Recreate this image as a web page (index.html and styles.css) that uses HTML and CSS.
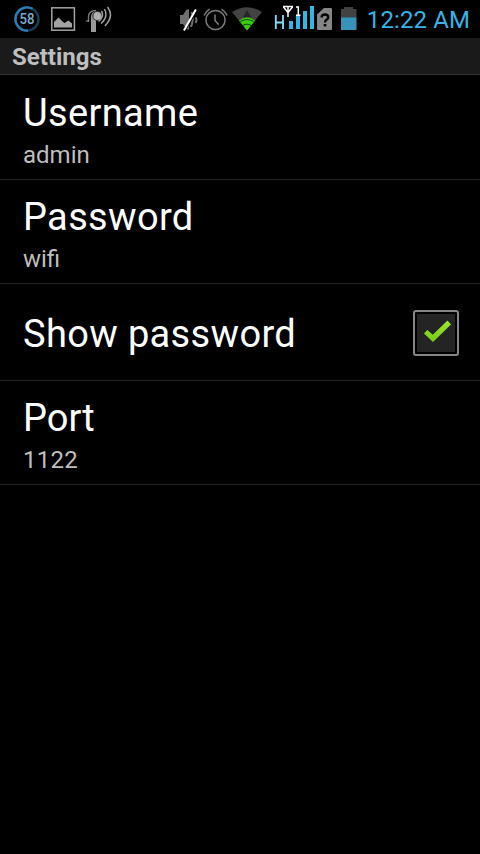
FILE: index.html
```html
<!DOCTYPE html>
<html lang="en">
<head>
<meta charset="utf-8">
<title>Settings</title>
<link rel="stylesheet" href="styles.css">
</head>
<body>
<header class="status">
  <div class="group notices">
    <svg width="28" height="38" viewBox="13 0 28 38">
      <circle cx="27" cy="19" r="11.6" fill="none" stroke="#173c57" stroke-width="2.4"/>
      <path d="M28 30.6A11.6 11.6 0 1 1 32.5 8.8" fill="none" stroke="#2b7db9" stroke-width="2.4"/>
      <text class="percent" x="27" y="24" text-anchor="middle" textLength="15" lengthAdjust="spacingAndGlyphs">58</text>
    </svg>
    <svg width="25" height="38" viewBox="51 0 25 38">
      <rect x="51.8" y="7.8" width="22.6" height="22.4" fill="none" stroke="#a3a3a3" stroke-width="1.5"/>
      <path d="M54 27.5V22l4.5-4.5 4 4 2 1.500 4-2.500 3.500 3v4z" fill="#a3a3a3"/>
    </svg>
    <svg width="27" height="38" viewBox="86 0 27 38">
      <path d="M91 32V17Q91 11 98 11L96 20V32z" fill="#999"/>
      <path d="M88.500 22V17Q88.500 10.500 96 10.500" fill="none" stroke="#777" stroke-width="1.400"/>
      <path d="M86 21h3" stroke="#999"/>
      <circle cx="97.300" cy="16" r="5" fill="#333"/>
      <circle cx="97.300" cy="16" r="3.900" fill="#b0b0b0"/>
      <path d="M101.500 11Q104.500 16 98.500 21.500M104.500 9Q108.500 17 101 23.500M107.500 7Q114.500 16 105 26" fill="none" stroke="#a0a0a0" stroke-width="1.500"/>
    </svg>
  </div>
  <div class="group system">
    <svg width="20" height="38" viewBox="179 0 20 38">
      <path d="M180 15h3l3.500-5.500h2.500v20h-2.500L183 24h-3z" fill="#707070"/>
      <path d="M191.500 12q2.500 7.500-.5 15M195.500 17.500q2 2 0 5.500" fill="none" stroke="#707070" stroke-width="2"/>
      <path d="M184.700 30.500L197 10" stroke="#000" stroke-width="2"/>
      <path d="M183.900 30.500L195.900 9.500" stroke="#fff" stroke-width="2"/>
    </svg>
    <svg width="26" height="38" viewBox="203 0 26 38">
      <g fill="none" stroke="#7b7b7b" stroke-width="1.500">
        <circle cx="215.500" cy="20" r="9.600"/>
        <path d="M215 14.500v6l3.700 4.300M204 15.500q1.800-4 5.600-6.300M221.500 9.200q4 2.300 5.600 6.300"/>
      </g>
    </svg>
    <svg class="wifi" width="30" height="38" viewBox="232 0 30 38">
      <path d="M232 12Q247 2.500 262 12L247 30.500z" fill="#424242"/>
      <path d="M247 10l4 7h-8z" fill="#252525"/>
      <path d="M239 20.500Q247 14.500 255 20.500L247 30.500z" fill="#36d006"/>
      <path d="M240.500 21.500Q247 17.500 253.500 21.500M243 25.500q4-2.500 8 0" fill="none" stroke="#174d0c" stroke-width="1.200"/>
    </svg>
    <svg width="42" height="38" viewBox="274 0 42 38">
      <path d="M275.800 15v14M283 15v14M275.800 22.500h7" fill="none" stroke="#8bdcf8" stroke-width="1.800"/>
      <path d="M289 21h4v8h-4zM296 16h4v13h-4zM303 11h4v18h-4zM310 6h4v23h-4z" fill="#33b5e5"/>
      <path d="M283 6.500h10M283.500 7L288 12.500L292.500 7M288 6v11" fill="none" stroke="#fff" stroke-width="1.500"/>
      <path d="M296 7h2.300V15M296 15.300h4.500" fill="none" stroke="#fff" stroke-width="1.500"/>
    </svg>
    <svg width="16" height="38" viewBox="317 0 16 38">
      <path d="M317 14.500L324 8h7q1 0 1 1V29q0 1-1 1H318q-1 0-1-1z" fill="#858585"/>
      <path d="M321.500 17.500q.2-3 3.500-3 3.300 0 3.300 2.700 0 1.500-1.800 2.600-1.500 1-1.500 2.700" fill="none" stroke="#050505" stroke-width="2.300"/>
      <path d="M323.700 24h2.600v2.500h-2.600z" fill="#050505"/>
    </svg>
    <svg width="16" height="38" viewBox="341 0 16 38">
      <path d="M341 9h3V7h9v2h3.500v8.500H341z" fill="#424242"/>
      <path d="M341 17.300h15.500V30H341z" fill="#3993b8"/>
    </svg>
  </div>
  <time class="clock">12:22 AM</time>
</header>
<h1 class="title"><span>Settings</span></h1>
<main class="list">
  <section class="row first">
    <h2 class="name">Username</h2>
    <p class="value">admin</p>
  </section>
  <section class="row">
    <h2 class="name">Password</h2>
    <p class="value">wifi</p>
  </section>
  <section class="row toggle">
    <h2 class="name">Show password</h2>
    <svg class="check" width="46" height="46" viewBox="413 310 46 46">
      <defs><linearGradient id="tick" x2="0" y2="1"><stop stop-color="#9dea32"/><stop offset="1" stop-color="#76ca10"/></linearGradient></defs>
      <rect x="414" y="311" width="44" height="44" rx="2" fill="#000" stroke="#858585" stroke-width="2"/>
      <path d="M417 314h38v38h-38z" fill="#242424"/>
      <path d="M424 333.500l3.300-3.500 5.500 4.700L447.500 320.500l3.500 4-18 17.500z" fill="url(#tick)"/>
    </svg>
  </section>
  <section class="row">
    <h2 class="name port">Port</h2>
    <p class="value number">1122</p>
  </section>
</main>
</body>
</html>
```
FILE: styles.css
```css
* { box-sizing: border-box; }
body { margin: 0; min-height: 854px; background: #000; color: #fff; font-family: Roboto, sans-serif; }
h1, h2, p { margin: 0; font-weight: 400; }
svg { display: block; flex: none; }
.status { display: flex; height: 38px; padding: 0 10px 0 13px; }
.group { display: flex; }
.notices { gap: 10px; }
.system { margin-left: 66px; gap: 4px; }
.system .wifi { margin-left: -1px; }
.system svg:nth-child(4) { margin-left: 8px; }
.system svg:nth-child(5) { margin-left: -3px; }
.system svg:nth-child(6) { margin-left: 4px; }
.percent { font-size: 15px; font-weight: 500; fill: #78add0; }
.clock { margin-left: auto; font-size: 24px; line-height: 40px; letter-spacing: 0.1px; color: #33b5e5; white-space: nowrap; }
.title { display: flex; align-items: center; height: 37px; padding: 2px 0 0 12px; border-bottom: 1px solid #333; background: #1a1a1a; color: #bebebe; font-size: 24px; line-height: 34px; font-weight: 700; }
.row { display: flex; flex-direction: column; height: 104px; padding: 14px 21px 0 23px; border-bottom: 1px solid #242424; }
.first { height: 105px; padding-top: 15px; }
.name { font-size: 38px; line-height: 46px; letter-spacing: 0.35px; white-space: nowrap; }
.port { letter-spacing: 0; }
.value { color: #bebebe; font-size: 24px; line-height: 28px; margin-top: 5px; }
.number { letter-spacing: 0.3px; }
.toggle { flex-direction: row; justify-content: space-between; align-items: center; height: 97px; padding-top: 2px; }
.toggle .name { padding-top: 2px; }
```
